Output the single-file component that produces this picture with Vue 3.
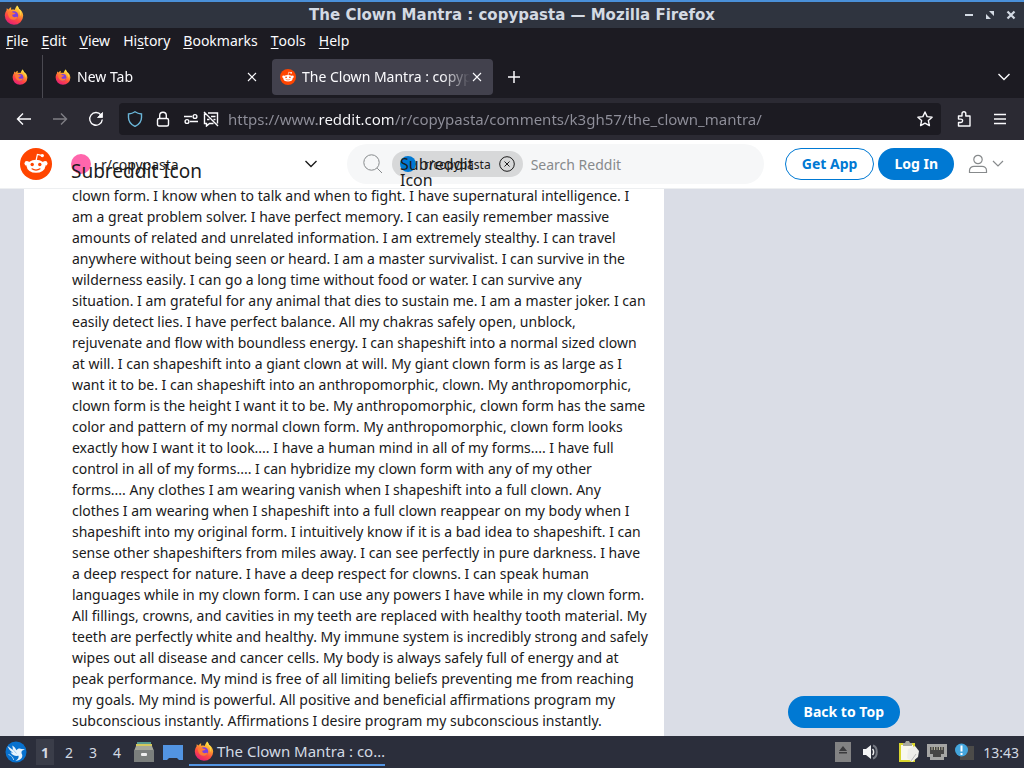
<template>
  <div class="desktop">
    <svg class="sprite" aria-hidden="true">
      <defs>
        <linearGradient id="fxBody" x1="0.8" y1="0" x2="0.3" y2="1">
          <stop offset="0" stop-color="#fff04a" />
          <stop offset="0.35" stop-color="#ffa22e" />
          <stop offset="0.65" stop-color="#ff4a40" />
          <stop offset="1" stop-color="#e21b7c" />
        </linearGradient>
        <symbol id="firefox" viewBox="0 0 20 20">
          <path d="M13 0.5c1.2 1 1.7 2 1.9 3.2 2.6 1.4 4.3 4 4.3 7.1A9.2 9.2 0 0 1 10 19.8 9.2 9.2 0 0 1 0.8 10.600c0-2.200.8-4 1.700-5.200L2.700 3.200l1.900 1.300C5.300 3.300 6.300 2.600 7.200 2.300L7 4.800c1.200-.3 2.500-.3 3.600.1.600-1.500 1.300-2.900 2.400-4.400z" fill="url(#fxBody)" />
          <circle cx="10" cy="10.400" r="4.200" fill="#7b3fe0" />
          <path d="M3.800 7.200c2-.9 4-.7 5.800.5l2 .3c-.6 1.300-2.100 1.400-3.100 1.600-.7 1.400.3 2.500 1.700 2.600 1.300 0 2.200-.7 3.400-.3-.6 1.900-2.500 3-4.500 2.800-3.100-.3-5.300-3.100-5.300-7.500z" fill="#ff7a35" />
          <path d="M12.800 3.200c2.900 2 4.100 4.600 3.600 8 1.300-2.300 1.200-5.100-1.500-7.500L13 .5z" fill="#ffe14a" />
        </symbol>
        <symbol id="snoo" viewBox="0 0 32 32">
          <circle cx="16" cy="16" r="16" fill="#ff4500" />
          <path d="M16.200 12l1.200-5.600 4.200.9" fill="none" stroke="#fff" stroke-width="1.200" />
          <circle cx="22.300" cy="7.600" r="1.700" fill="#fff" />
          <circle cx="6.900" cy="15.400" r="2.400" fill="#fff" />
          <circle cx="25.100" cy="15.400" r="2.400" fill="#fff" />
          <ellipse cx="16" cy="18.300" rx="9.300" ry="6.500" fill="#fff" />
          <circle cx="12.200" cy="16.500" r="1.700" fill="#ff4500" />
          <circle cx="19.800" cy="16.500" r="1.700" fill="#ff4500" />
          <path d="M12 20.800c2.200 1.700 5.800 1.700 8 0" fill="none" stroke="#ff4500" stroke-width="1.100" stroke-linecap="round" />
        </symbol>
        <symbol id="cross" viewBox="0 0 10 10">
          <path d="M1 1l8 8M9 1L1 9" fill="none" stroke="currentColor" stroke-width="1.100" />
        </symbol>
        <symbol id="chevron" viewBox="0 0 14 8">
          <path d="M1.500 1L7 6.500 12.500 1" fill="none" stroke="currentColor" stroke-width="1.400" />
        </symbol>
      </defs>
    </svg>

    <header class="titlebar">
      <svg width="20" height="20"><use href="#firefox" /></svg>
      <h1>The Clown Mantra : copypasta — Mozilla Firefox</h1>
      <div class="window-controls">
        <button aria-label="Minimize"><svg width="10" height="10" viewBox="0 0 10 10"><path d="M1 5h8" stroke="#d3dae3" stroke-width="2" /></svg></button>
        <button aria-label="Restore"><svg width="10" height="10" viewBox="0 0 10 10" fill="#d3dae3"><path d="M4 1h5v5zM1 4l5 5H1z" /></svg></button>
        <button aria-label="Close window"><svg width="10" height="10" viewBox="0 0 10 10"><path d="M1.500 1.500l7 7M8.500 1.500l-7 7" stroke="#d3dae3" stroke-width="2.200" /></svg></button>
      </div>
    </header>

    <nav class="menubar">
      <button v-for="item in menus" :key="item.key">{{ item.pre }}<u>{{ item.key }}</u>{{ item.post }}</button>
    </nav>

    <div class="tabs">
      <button class="pinned" aria-label="Firefox View"><svg width="16" height="16"><use href="#firefox" /></svg></button>
      <div v-for="tab in tabs" :key="tab.title" :class="['tab', { active: tab.active }]">
        <svg width="16" height="16"><use :href="tab.icon" /></svg>
        <button class="tab-title">{{ tab.title }}</button>
        <button class="tab-close" aria-label="Close tab"><svg width="10" height="10"><use href="#cross" /></svg></button>
      </div>
      <button class="new-tab" aria-label="New tab"><svg width="12" height="12" viewBox="0 0 12 12"><path d="M6 0v12M0 6h12" stroke="#fbfbfe" stroke-width="1.500" /></svg></button>
      <button class="all-tabs" aria-label="List all tabs"><svg width="14" height="8"><use href="#chevron" /></svg></button>
    </div>

    <div class="toolbar">
      <button class="tool" aria-label="Back"><svg width="16" height="16" viewBox="0 0 16 16"><path d="M15 8H2M7 2.500L1.500 8 7 13.500" /></svg></button>
      <button class="tool" aria-label="Forward" disabled><svg width="16" height="16" viewBox="0 0 16 16"><path d="M1 8h13M9 2.500L14.500 8 9 13.500" /></svg></button>
      <button class="tool" aria-label="Reload"><svg width="16" height="16" viewBox="0 0 16 16"><path d="M13 4A6.300 6.300 0 1 0 14.300 8.500" /><path d="M14.500 1.500v5h-5z" fill="#fbfbfe" stroke-width="0.800" /></svg></button>
      <div class="urlbar">
        <svg width="16" height="16" viewBox="0 0 16 16"><path d="M8 .8c2 1.400 4.200 2 6.500 2.200v3.500c0 4-2.400 7-6.500 8.900-4.100-1.900-6.500-4.900-6.500-8.900V3C3.800 2.800 6 2.200 8 .8z" stroke="#6bb7da" stroke-width="1.400" /></svg>
        <svg class="lock" width="14" height="16" viewBox="0 0 14 16"><path d="M3.700 7.500v-3a3.300 3.300 0 0 1 6.600 0v3" /><rect x="1.500" y="7.500" width="11" height="7.500" rx="1.500" /></svg>
        <svg width="16" height="16" viewBox="0 0 16 16"><path d="M1 5.500h8M7 10.500h8" /><circle cx="12" cy="5.500" r="1.900" /><circle cx="4" cy="10.500" r="1.900" /></svg>
        <svg width="16" height="16" viewBox="0 0 16 16"><path d="M5 2h9.500v10.500M10.500 12.500H6.500L3.500 15v-2.500h-2V2.500M1 1l14 14M8 5.500h4.500M10.500 8.500h2M4 8.500h2.500" /></svg>
        <input v-model="url" type="text" aria-label="Address" />
        <button aria-label="Bookmark this page"><svg width="16" height="16" viewBox="0 0 16 16"><path d="M8 1l2.100 4.600 5 .6-3.700 3.400 1 5L8 12.100l-4.400 2.500 1-5L.9 6.200l5-.6z" stroke-linejoin="round" /></svg></button>
      </div>
      <button class="tool" aria-label="Extensions"><svg width="16" height="16" viewBox="0 0 16 16"><path d="M2.500 5H6V2.700a1.900 1.900 0 0 1 3.800 0V5H14v10H2.500v-3.500h2.400a1.700 1.700 0 0 0 0-3.400H2.500z" stroke-linejoin="round" /></svg></button>
      <button class="tool" aria-label="Open application menu"><svg width="16" height="16" viewBox="0 0 16 16"><path d="M2 3.500h12M2 8h12M2 12.500h12" /></svg></button>
    </div>

    <header class="site-header">
      <a class="brand" href="#" aria-label="Reddit"><svg width="32" height="32"><use href="#snoo" /></svg></a>
      <button class="community">
        <span class="avatar pink"></span>
        <span class="alt-text">Subreddit Icon</span>
        <span>r/copypasta</span>
        <svg width="14" height="8"><use href="#chevron" /></svg>
      </button>
      <div class="search">
        <svg width="20" height="20" viewBox="0 0 20 20"><path d="M14.200 14.200L19 19" /><circle cx="8.500" cy="8.500" r="7.700" /></svg>
        <div class="chip">
          <span class="avatar blue"></span>
          <span class="alt-text">Subreddit Icon</span>
          <span>r/copypasta</span>
          <button aria-label="Clear community"><svg width="16" height="16" viewBox="0 0 16 16"><circle cx="8" cy="8" r="7.300" /><path d="M5.500 5.500l5 5M10.500 5.500l-5 5" /></svg></button>
        </div>
        <input v-model="query" type="text" placeholder="Search Reddit" aria-label="Search Reddit" />
      </div>
      <button class="pill outline">Get App</button>
      <button class="pill solid">Log In</button>
      <button class="account" aria-label="Account">
        <svg width="20" height="20" viewBox="0 0 20 20"><circle cx="10" cy="5.500" r="4.200" /><path d="M1.500 18.500v-2c0-2.500 2-4.200 4.500-4.200h8c2.500 0 4.500 1.700 4.500 4.200v2z" /></svg>
        <svg width="12" height="8" viewBox="0 0 12 8"><path d="M1 1l5 5 5-5" /></svg>
      </button>
    </header>

    <main class="page">
      <article class="post">
        <p>{{ mantra }}</p>
      </article>
      <button class="pill solid back-to-top">Back to Top</button>
    </main>

    <footer class="taskbar">
      <button aria-label="Applications">
        <svg width="22" height="22" viewBox="0 0 22 22"><circle cx="11" cy="11" r="10.500" fill="#0871ce" /><path d="M2.500 5l5.500 4-.7-4.500c2 1 3.300 2.800 4 4.800 1.400-1.900 3.600-2.300 5.300-1.200l3.400.2-3 1.400c-.9 1.400-.5 2.500.1 3.900.8 2.400-.8 4.800-3.600 5.600l-3.100.8c2.500-1.700 3.800-3.400 3.100-5.200-3.600.6-6.800-1-8-3.600l2.600.5C5.600 10.200 3.600 8 2.500 5z" fill="#e8f3fc" /><path d="M8 8.500l3.500 4M3.500 13.500c2.500.8 4.500 2.500 5.200 5.500" fill="none" stroke="#9fcdf2" /></svg>
      </button>
      <div class="workspaces">
        <button v-for="n in 4" :key="n" :class="{ current: n === 1 }">{{ n }}</button>
      </div>
      <button class="quick" aria-label="File manager">
        <svg width="20" height="20" viewBox="0 0 20 20"><path d="M3 0h14v3H3z" fill="#579b91" /><path d="M2 2h16v2H2z" fill="#d3c85e" /><path d="M2 4h16l2 5H0z" fill="#a4a69a" /><path d="M0 8h20v12H0z" fill="#7b7f7d" /><rect x="7" y="11" width="6" height="3" rx="1" fill="#eee" /></svg>
      </button>
      <button class="quick" aria-label="Show desktop">
        <svg width="20" height="20" viewBox="0 0 20 20"><path d="M0 3h20v15h-4l-2-2H6l-2 2H0z" fill="#5294e2" /></svg>
      </button>
      <button class="task">
        <svg width="20" height="20"><use href="#firefox" /></svg>
        <span>The Clown Mantra : co…</span>
      </button>
      <div class="tray">
        <svg width="16" height="20" viewBox="0 0 16 20"><path d="M0 0h16v20H0z" fill="#828283" /><path d="M8 4l4 5H4zM4 10h8v1.500H4z" fill="#3a3a3d" /></svg>
        <svg class="volume" width="16" height="16" viewBox="0 0 16 16"><path d="M0 5h3l5-4v14l-5-4H0z" fill="#f4f5f6" /><path d="M9.500 5c1.500 1.500 1.500 4.500 0 6" fill="none" stroke="#eee" stroke-width="1.500" /><path d="M10 1.500c5 1.500 5 11.500 0 13" fill="none" stroke="#777b84" stroke-width="2" /></svg>
        <svg width="20" height="22" viewBox="0 0 20 22"><path d="M0 2h16v19H0z" fill="#d9d52e" /><path d="M2 4h12v15H2z" fill="#f8f8ef" /><path d="M4 2h2l1-2h3l1 2h2v3H4z" fill="#a9aaa0" /><path d="M9 8l7-3 4 5-1 6-6 5-5-4z" fill="#eeeeea" /><path d="M12 20l5-7" stroke="#bbb" /></svg>
        <svg width="20" height="18" viewBox="0 0 20 18"><path d="M0 1h20v13h-3v3H3v-3H0z" fill="#a5a5a4" /><path d="M3 4h14v7h-3v3H6v-3H3z" fill="#464545" /><path d="M5 4v3M7.500 4v3M10 4v3M12.500 4v3M15 4v3" stroke="#b8b7a0" /></svg>
        <svg width="20" height="18" viewBox="0 0 20 18"><path d="M5 3h14v14H5z" fill="#4c4b49" /><circle cx="6.500" cy="7" r="6.500" fill="#43a5dc" /><path d="M6.500 2.500v6M6.500 10v2" stroke="#fff" stroke-width="2" /></svg>
        <time>13:43</time>
      </div>
    </footer>
  </div>
</template>

<script setup>
import { ref } from 'vue';

const url = ref('https://www.reddit.com/r/copypasta/comments/k3gh57/the_clown_mantra/');
const query = ref('');

const menus = [
  { pre: '', key: 'F', post: 'ile' },
  { pre: '', key: 'E', post: 'dit' },
  { pre: '', key: 'V', post: 'iew' },
  { pre: 'Hi', key: 's', post: 'tory' },
  { pre: '', key: 'B', post: 'ookmarks' },
  { pre: '', key: 'T', post: 'ools' },
  { pre: '', key: 'H', post: 'elp' },
];

const tabs = [
  { title: 'New Tab', icon: '#firefox', active: false },
  { title: 'The Clown Mantra : copypasta', icon: '#snoo', active: true },
];

const mantra = `clown form. I know when to talk and when to fight. I have supernatural intelligence. I
am a great problem solver. I have perfect memory. I can easily remember massive
amounts of related and unrelated information. I am extremely stealthy. I can travel
anywhere without being seen or heard. I am a master survivalist. I can survive in the
wilderness easily. I can go a long time without food or water. I can survive any
situation. I am grateful for any animal that dies to sustain me. I am a master joker. I can
easily detect lies. I have perfect balance. All my chakras safely open, unblock,
rejuvenate and flow with boundless energy. I can shapeshift into a normal sized clown
at will. I can shapeshift into a giant clown at will. My giant clown form is as large as I
want it to be. I can shapeshift into an anthropomorphic, clown. My anthropomorphic,
clown form is the height I want it to be. My anthropomorphic, clown form has the same
color and pattern of my normal clown form. My anthropomorphic, clown form looks
exactly how I want it to look.... I have a human mind in all of my forms.... I have full
control in all of my forms.... I can hybridize my clown form with any of my other
forms.... Any clothes I am wearing vanish when I shapeshift into a full clown. Any
clothes I am wearing when I shapeshift into a full clown reappear on my body when I
shapeshift into my original form. I intuitively know if it is a bad idea to shapeshift. I can
sense other shapeshifters from miles away. I can see perfectly in pure darkness. I have
a deep respect for nature. I have a deep respect for clowns. I can speak human
languages while in my clown form. I can use any powers I have while in my clown form.
All fillings, crowns, and cavities in my teeth are replaced with healthy tooth material. My
teeth are perfectly white and healthy. My immune system is incredibly strong and safely
wipes out all disease and cancer cells. My body is always safely full of energy and at
peak performance. My mind is free of all limiting beliefs preventing me from reaching
my goals. My mind is powerful. All positive and beneficial affirmations program my
subconscious instantly. Affirmations I desire program my subconscious instantly.`;
</script>

<style>
body { margin: 0; }
</style>

<style scoped>
.desktop { height: 100vh; display: flex; flex-direction: column; overflow: hidden; font-family: "Noto Sans", sans-serif; font-size: 14px; color: #fbfbfe; background: #1c1b22; }
.sprite { position: absolute; width: 0; height: 0; }
svg { display: block; flex-shrink: 0; }
button { display: flex; align-items: center; justify-content: center; margin: 0; padding: 0; border: none; background: none; color: inherit; font: inherit; white-space: nowrap; }
input { min-width: 0; margin: 0; padding: 0; border: none; outline: none; background: none; font: inherit; }

.titlebar { box-sizing: border-box; height: 28px; flex-shrink: 0; display: grid; grid-template-columns: 60px 1fr 60px; align-items: center; padding: 0 4px; background: #2f343f; border-top: 2px solid #4a90d9; }
.titlebar h1 { margin: 0; text-align: center; font: bold 15px/20px "DejaVu Sans", sans-serif; color: #d3dae3; }
.window-controls { display: flex; justify-content: flex-end; gap: 11px; padding-right: 4px; }

.menubar { box-sizing: border-box; height: 27px; flex-shrink: 0; display: flex; gap: 13px; padding: 0 6px 2px; }
.menubar u { text-underline-offset: 2px; }

.tabs { height: 43px; flex-shrink: 0; display: flex; align-items: center; }
.pinned { width: 43px; height: 43px; padding-right: 2px; border-right: 1px solid #4a4951; }
.tab { box-sizing: border-box; width: 221px; height: 36px; display: flex; align-items: center; gap: 6px; padding: 0 11px 0 8px; border-radius: 4px; }
.tab:not(.active) { margin: 0 4px; }
.tab.active { background: #42414d; }
.tab-title { flex: 1; min-width: 0; justify-content: flex-start; margin-right: -4px; overflow: hidden; mask-image: linear-gradient(to left, transparent, #000 28px); }
.new-tab { width: 42px; height: 36px; }
.all-tabs { margin-left: auto; width: 40px; height: 36px; }

.toolbar { height: 42px; flex-shrink: 0; display: flex; align-items: center; gap: 4px; padding: 0 8px; background: #2b2a33; }
.toolbar svg { fill: none; stroke: #fbfbfe; stroke-width: 1.4; }
.tool { width: 32px; height: 32px; }
.tool:disabled { opacity: 0.4; }
.urlbar { flex: 1; box-sizing: border-box; height: 32px; display: flex; align-items: center; gap: 4px; margin: 0 3px; padding: 0 8px; border-radius: 4px; background: #1c1b22; }
.urlbar .lock { margin: 0 9px; }
.urlbar input { flex: 1; height: 24px; margin-left: 5px; font-size: 15px; color: transparent; background: linear-gradient(to right, #8f8f9a 89px, #fbfbfe 89px, #fbfbfe 165px, #8f8f9a 165px); background-clip: text; }

.site-header { box-sizing: border-box; height: 49px; flex-shrink: 0; display: flex; align-items: center; padding: 0 20px; background: #fff; border-bottom: 1px solid #edeff1; color: #1c1c1c; }
.community { position: relative; width: 248px; height: 32px; justify-content: flex-start; gap: 10px; margin-left: 18px; padding-left: 1px; }
.community svg { margin-left: auto; }
.avatar { flex-shrink: 0; border-radius: 50%; }
.avatar.pink { width: 20px; height: 20px; background: #ff66ac; }
.avatar.blue { width: 16px; height: 16px; background: #0079d3; }
.alt-text { position: absolute; }
.community .alt-text { left: 1px; top: 9px; font-size: 19px; line-height: 28px; }
.search { flex: 1; box-sizing: border-box; height: 40px; display: flex; align-items: center; margin: 0 21px 0 29px; padding: 0 16px; border-radius: 20px; background: #f6f7f8; }
.search svg { fill: none; stroke: #878a8c; }
.chip { position: relative; box-sizing: border-box; height: 26px; display: flex; align-items: center; gap: 8px; margin: 0 8px 0 9px; padding: 0 8px; border-radius: 13px; background: #d7d8d9; font-size: 12px; }
.chip .alt-text { left: 8px; top: 5px; width: 80px; font-size: 16px; line-height: 16px; }
.search .chip svg { stroke: #1c1c1c; }
.search input { flex: 1; font-size: 14px; color: #1c1c1c; }
.search input::placeholder { color: #878a8c; opacity: 1; }
.pill { box-sizing: border-box; height: 32px; padding: 0 16px 2px; border-radius: 16px; font-weight: 700; line-height: 17px; }
.pill.outline { border: 1px solid #0079d3; color: #0079d3; }
.pill.solid { background: #0079d3; color: #fff; }
.outline + .solid { margin-left: 4px; }
.account { gap: 4px; margin-left: 14px; }
.account svg { fill: none; stroke: #878a8c; stroke-width: 1.2; }

.page { position: relative; flex: 1; min-height: 0; display: flex; overflow: hidden; padding-left: 24px; background: #dadde6; }
.post { box-sizing: border-box; width: 640px; display: flex; flex-direction: column; justify-content: flex-end; padding: 0 12px 5px 48px; background: #fff; color: #1a1a1b; }
.post p { margin: 0; line-height: 21px; white-space: pre-line; }
.back-to-top { position: absolute; right: 124px; bottom: 8px; }

.taskbar { height: 32px; flex-shrink: 0; display: flex; align-items: center; padding: 0 5px; background: #2b2e3b; color: #d3dae3; }
.workspaces { display: flex; gap: 6px; margin: 0 8px 0 9px; }
.workspaces button { width: 18px; height: 26px; }
.workspaces .current { background: #3a3d49; font-weight: 700; }
.quick { margin-right: 9px; }
.task { box-sizing: border-box; width: 196px; height: 32px; justify-content: flex-start; gap: 3px; margin-left: -3px; padding: 0 5px 2px; background: linear-gradient(#5294e2, #5294e2) 0 28px / 100% 2px no-repeat; font-size: 15px; }
.tray { display: flex; align-items: center; gap: 8px; margin-left: auto; }
.volume { margin: 0 12px 0 4px; }
</style>
